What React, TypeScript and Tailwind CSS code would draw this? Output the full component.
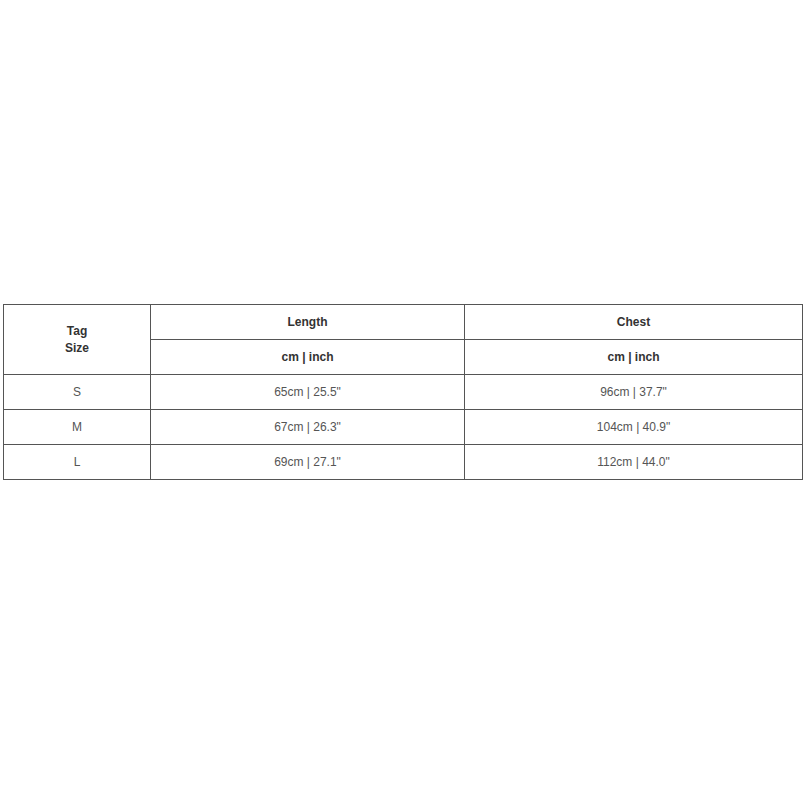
const rows = [
  { size: "S", length: "65cm | 25.5\"", chest: "96cm | 37.7\"" },
  { size: "M", length: "67cm | 26.3\"", chest: "104cm | 40.9\"" },
  { size: "L", length: "69cm | 27.1\"", chest: "112cm | 44.0\"" },
];

export default function App() {
  return (
    <div className="w-[804px] h-[804px] bg-white pt-[304px] pl-[3px]" style={{ fontFamily: '"Liberation Sans", Arial, sans-serif' }}>
      <table className="w-[799px] border-collapse border border-[#222] text-[12px] leading-[17px] text-center table-fixed">
        <colgroup>
          <col className="w-[147px]" />
          <col className="w-[314px]" />
          <col className="w-[338px]" />
        </colgroup>
        <thead>
          <tr className="h-[35px]">
            <th rowSpan={2} className="border border-[#555] font-bold text-[#333]">
              Tag
              <br />
              Size
            </th>
            <th className="border border-[#555] font-bold text-[#333]">Length</th>
            <th className="border border-[#555] font-bold text-[#333]">Chest</th>
          </tr>
          <tr className="h-[35px]">
            <th className="border border-[#555] font-bold text-[#333]">cm | inch</th>
            <th className="border border-[#555] font-bold text-[#333]">cm | inch</th>
          </tr>
        </thead>
        <tbody>
          {rows.map((r) => (
            <tr key={r.size} className="h-[35px]">
              <td className="border border-[#555] text-[#555]">{r.size}</td>
              <td className="border border-[#555] text-[#555]">{r.length}</td>
              <td className="border border-[#555] text-[#555]">{r.chest}</td>
            </tr>
          ))}
        </tbody>
      </table>
    </div>
  );
}
